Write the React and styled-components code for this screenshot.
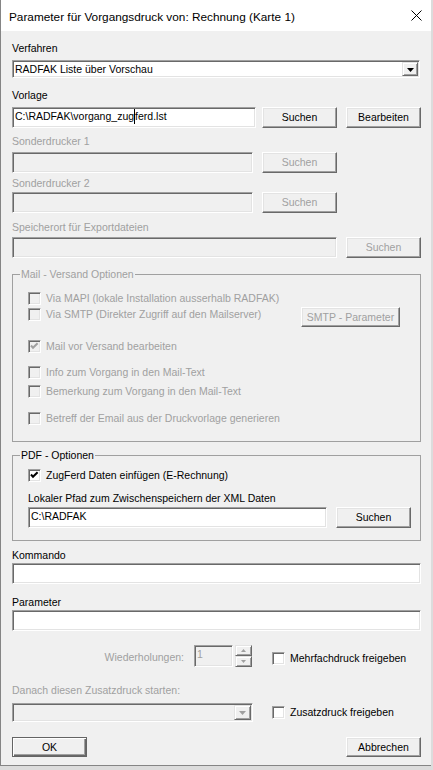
import React from "react";
import styled, { createGlobalStyle } from "styled-components";

const GlobalStyle = createGlobalStyle`
    html, body {
        margin: 0;
        padding: 0;
        background: #dcdcdc;
    }
    body {
        font-family: "Liberation Sans", Arial, sans-serif;
        font-size: 10.5px;
        color: #000;
    }
    * {
        box-sizing: border-box;
    }
`;

const Window = styled.div`
    width: 431px;
    height: 766px;
    background: #f0f0f0;
    border-left: 1px solid #858585;
    border-bottom: 1px solid #858585;
    display: flex;
    flex-direction: column;
`;

const TitleBar = styled.div`
    height: 31px;
    flex: none;
    background: #fff;
    display: flex;
    align-items: center;
    justify-content: space-between;
    padding: 3px 9px 0 8px;
    font-family: "Liberation Sans", Arial, sans-serif;
    font-size: 11.8px;
    line-height: 15px;
    svg {
        display: block;
        margin-top: -3px;
    }
`;

const Content = styled.div`
    flex: 1;
    display: flex;
    flex-direction: column;
    padding: 0 10px 0 11px;
`;

const Label = styled.div`
    height: 13px;
    line-height: 13px;
    margin-top: ${(p) => p.$mt || 0}px;
    color: ${(p) => (p.$disabled ? "#a0a0a0" : "#000")};
    white-space: nowrap;
`;

const Row = styled.div`
    display: flex;
    align-items: flex-start;
    margin-top: ${(p) => p.$mt || 0}px;
    gap: ${(p) => p.$gap || 9}px;
`;

const Edit = styled.div`
    width: ${(p) => (p.$w ? p.$w + "px" : "100%")};
    height: ${(p) => p.$h || 21}px;
    flex: none;
    background: ${(p) => (p.$disabled ? "#f0f0f0" : "#fff")};
    color: ${(p) => (p.$disabled ? "#a0a0a0" : "#000")};
    border: 1px solid;
    border-color: #a0a0a0 #fff #fff #a0a0a0;
    box-shadow: inset 1px 1px 0 #696969, inset -1px -1px 0 #e3e3e3;
    padding: 2px 2px 0;
    line-height: 13px;
    white-space: nowrap;
    overflow: hidden;
`;

const Caret = styled.span`
    display: inline-block;
    width: 1px;
    height: 15px;
    margin: -1px 0 -2px;
    vertical-align: top;
    background: #000;
`;

const Button = styled.button`
    width: ${(p) => p.$w || 75}px;
    height: ${(p) => p.$h || 21}px;
    flex: none;
    margin: ${(p) => p.$m || 0};
    padding: 0;
    font: inherit;
    background: #f0f0f0;
    color: ${(p) => (p.disabled ? "#a0a0a0" : "#000")};
    border: 1px solid;
    border-color: ${(p) =>
        p.$default ? "#646464" : "#fff #696969 #696969 #fff"};
    box-shadow: ${(p) =>
        p.$default
            ? "inset 1px 1px 0 #fff, inset -1px -1px 0 #696969, inset -2px -2px 0 #a0a0a0"
            : "inset -1px -1px 0 #a0a0a0, inset 1px 1px 0 #e3e3e3"};
    display: flex;
    align-items: center;
    justify-content: center;
    line-height: 13px;
`;

const Combo = styled.div`
    width: ${(p) => p.$w}px;
    height: ${(p) => p.$h}px;
    flex: none;
    display: flex;
    align-items: stretch;
    margin-top: ${(p) => p.$mt || 0}px;
    background: ${(p) => (p.$disabled ? "#f0f0f0" : "#fff")};
    border: 1px solid;
    border-color: #a0a0a0 #fff #fff #a0a0a0;
    box-shadow: inset 1px 1px 0 #696969, inset -1px -1px 0 #e3e3e3;
    padding: 1px;
`;

const ComboText = styled.div`
    flex: 1;
    padding: 1px 0 0 1px;
    line-height: 13px;
    white-space: nowrap;
`;

const DropButton = styled.div`
    width: ${(p) => p.$w || 16}px;
    flex: none;
    background: #f0f0f0;
    border: 1px solid;
    border-color: #e3e3e3 #696969 #696969 #e3e3e3;
    box-shadow: inset 1px 1px 0 #fff, inset -1px -1px 0 #a0a0a0;
    display: flex;
    align-items: center;
    justify-content: center;
    svg {
        display: block;
        margin-top: 1px;
    }
`;

const Group = styled.fieldset`
    margin: ${(p) => p.$mt}px 0 0;
    padding: 0 0 ${(p) => p.$pb}px 15px;
    border: 1px solid #a0a0a0;
    min-width: 0;
`;

const Legend = styled.legend`
    margin-left: -8px;
    padding: 0 1px;
    line-height: 13px;
    color: ${(p) => (p.$disabled ? "#a0a0a0" : "#000")};
`;

const CheckRow = styled.div`
    display: flex;
    align-items: flex-start;
    height: 13px;
    margin-top: ${(p) => p.$mt || 0}px;
    margin-left: ${(p) => p.$ml || 0}px;
    gap: 5px;
    line-height: 13px;
    white-space: nowrap;
    color: ${(p) => (p.$disabled ? "#a0a0a0" : "#000")};
`;

const Box = styled.span`
    width: 13px;
    height: 13px;
    flex: none;
    background: ${(p) => (p.$disabled ? "#f0f0f0" : "#fff")};
    border: 1px solid;
    border-color: #a0a0a0 #fff #fff #a0a0a0;
    box-shadow: inset 1px 1px 0 #696969, inset -1px -1px 0 #e3e3e3;
    svg {
        display: block;
    }
`;

const SmtpButton = styled(Button)`
    margin: -1px 20px 0 auto;
`;

const SpinLabel = styled.div`
    width: 172px;
    margin-top: 6px;
    text-align: right;
    line-height: 13px;
    color: #a0a0a0;
`;

const SpinButtons = styled.div`
    display: flex;
    flex-direction: column;
    margin-left: -8px;
`;

const SpinBtn = styled.div`
    width: 17px;
    height: 11px;
    background: #f0f0f0;
    border: 1px solid;
    border-color: #e3e3e3 #696969 #696969 #e3e3e3;
    box-shadow: inset 1px 1px 0 #fff, inset -1px -1px 0 #a0a0a0;
    display: flex;
    align-items: center;
    justify-content: center;
    svg {
        display: block;
    }
`;

const LeftCol = styled.div`
    width: 241px;
    display: flex;
    flex-direction: column;
`;

const Footer = styled.div`
    display: flex;
    justify-content: space-between;
    margin-top: 15px;
`;

function Check({ checked, disabled, children, mt, ml, extra }) {
    return (
        <CheckRow $mt={mt} $ml={ml} $disabled={disabled}>
            <Box $disabled={disabled}>
                {checked && (
                    <svg width="11" height="11" viewBox="0 0 11 11">
                        <polyline
                            points="2,4.5 4,6.8 8.6,2.2"
                            fill="none"
                            stroke={disabled ? "#a0a0a0" : "#000"}
                            strokeWidth="2"
                        />
                    </svg>
                )}
            </Box>
            <span>{children}</span>
            {extra}
        </CheckRow>
    );
}

function Arrow({ color = "#000", w = 7, h = 4, up }) {
    return (
        <svg width={w} height={h} viewBox={`0 0 ${w} ${h}`}>
            <polygon
                points={up ? `0,${h} ${w},${h} ${w / 2},0` : `0,0 ${w},0 ${w / 2},${h}`}
                fill={color}
            />
        </svg>
    );
}

export default function App() {
    return (
        <>
            <GlobalStyle />
            <Window>
                <TitleBar>
                    <span>Parameter für Vorgangsdruck von: Rechnung (Karte 1)</span>
                    <svg width="11" height="11" viewBox="0 0 11 11">
                        <path d="M0.5 0.5 L10.5 10.5 M10.5 0.5 L0.5 10.5" stroke="#000" strokeWidth="1" />
                    </svg>
                </TitleBar>
                <Content>
                    <Label $mt={11}>Verfahren</Label>
                    <Row $mt={5}>
                        <Combo $w={408} $h={18}>
                            <ComboText>RADFAK Liste über Vorschau</ComboText>
                            <DropButton>
                                <Arrow />
                            </DropButton>
                        </Combo>
                    </Row>

                    <Label $mt={11}>Vorlage</Label>
                    <Row $mt={5} $gap={6}>
                        <Edit $w={244}>
                            C:\RADFAK\vorgang_zug<Caret />ferd.lst
                        </Edit>
                        <Button>Suchen</Button>
                        <Button $m="0 0 0 3px">Bearbeiten</Button>
                    </Row>

                    <Label $mt={7} $disabled>Sonderdrucker 1</Label>
                    <Row $mt={4}>
                        <Edit $w={241} $disabled />
                        <Button disabled>Suchen</Button>
                    </Row>

                    <Label $mt={4} $disabled>Sonderdrucker 2</Label>
                    <Row $mt={2}>
                        <Edit $w={241} $disabled />
                        <Button disabled>Suchen</Button>
                    </Row>

                    <Label $mt={8} $disabled>Speicherort für Exportdateien</Label>
                    <Row $mt={3}>
                        <Edit $w={325} $disabled />
                        <Button disabled>Suchen</Button>
                    </Row>

                    <Group $mt={10} $pb={16}>
                        <Legend $disabled>Mail - Versand Optionen</Legend>
                        <Check disabled mt={11}>
                            Via MAPI (lokale Installation ausserhalb RADFAK)
                        </Check>
                        <Check
                            disabled
                            mt={3}
                            extra={
                                <SmtpButton disabled $w={99} $h={20}>
                                    SMTP - Parameter
                                </SmtpButton>
                            }
                        >
                            Via SMTP (Direkter Zugriff auf den Mailserver)
                        </Check>
                        <Check disabled checked mt={19}>
                            Mail vor Versand bearbeiten
                        </Check>
                        <Check disabled mt={13}>
                            Info zum Vorgang in den Mail-Text
                        </Check>
                        <Check disabled mt={6}>
                            Bemerkung zum Vorgang in den Mail-Text
                        </Check>
                        <Check disabled mt={14}>
                            Betreff der Email aus der Druckvorlage generieren
                        </Check>
                    </Group>

                    <Group $mt={7} $pb={12}>
                        <Legend>PDF - Optionen</Legend>
                        <Check checked mt={7}>
                            ZugFerd Daten einfügen (E-Rechnung)
                        </Check>
                        <Label $mt={10}>Lokaler Pfad zum Zwischenspeichern der XML Daten</Label>
                        <Row $mt={2}>
                            <Edit $w={299}>C:\RADFAK</Edit>
                            <Button>Suchen</Button>
                        </Row>
                    </Group>

                    <Label $mt={8}>Kommando</Label>
                    <Row $mt={1}>
                        <Edit />
                    </Row>

                    <Label $mt={12}>Parameter</Label>
                    <Row $mt={1}>
                        <Edit />
                    </Row>

                    <Row $mt={14} $gap={10}>
                        <SpinLabel>Wiederholungen:</SpinLabel>
                        <Edit $w={39} $h={22} $disabled>
                            1
                        </Edit>
                        <SpinButtons>
                            <SpinBtn>
                                <Arrow color="#a0a0a0" w={5} h={3} up />
                            </SpinBtn>
                            <SpinBtn>
                                <Arrow color="#a0a0a0" w={5} h={3} />
                            </SpinBtn>
                        </SpinButtons>
                        <Check mt={7} ml={10}>
                            Mehrfachdruck freigeben
                        </Check>
                    </Row>

                    <Row $mt={0} $gap={19}>
                        <LeftCol>
                            <Label $mt={17} $disabled>
                                Danach diesen Zusatzdruck starten:
                            </Label>
                            <Combo $w={241} $h={19} $mt={6} $disabled>
                                <ComboText />
                                <DropButton $w={17}>
                                    <Arrow color="#a0a0a0" />
                                </DropButton>
                            </Combo>
                        </LeftCol>
                        <Check mt={39}>Zusatzdruck freigeben</Check>
                    </Row>

                    <Footer>
                        <Button $default $h={20}>
                            OK
                        </Button>
                        <Button $h={20}>Abbrechen</Button>
                    </Footer>
                </Content>
            </Window>
        </>
    );
}
